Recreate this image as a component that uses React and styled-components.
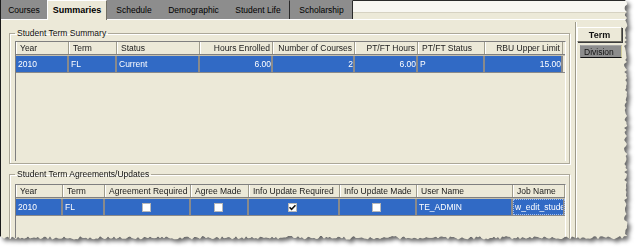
import React from "react";
import styled, { createGlobalStyle } from "styled-components";

const BEIGE = "#ECE9D8";
const TAB_GRAY = "#8d8d8d";
const SEL_BLUE = "#316AC5";

const Global = createGlobalStyle`
  html, body { margin: 0; padding: 0; background: #ffffff; }
  body {
    font-family: "Liberation Sans", Arial, sans-serif;
    font-size: 8.5px;
    color: #000;
  }
  #root { width: 637px; height: 247px; overflow: hidden; }
`;

const W = 629;
const H = 241;

function buildTornClip() {
  let seed = 11;
  const rnd = () => {
    seed = (seed * 9301 + 49297) % 233280;
    return seed / 233280;
  };
  const pts = ["0px 0px", `${W - 4}px 0px`];
  for (let y = 2; y <= H - 5; y += 2) {
    pts.push(`${(W - 5 + rnd() * 3.5).toFixed(1)}px ${y}px`);
  }
  for (let x = W - 5; x >= 0; x -= 2) {
    pts.push(`${x}px ${(H - 5 + rnd() * 3.5).toFixed(1)}px`);
  }
  pts.push(`0px ${H - 4}px`);
  return `polygon(${pts.join(",")})`;
}
const TORN = buildTornClip();

const Shadow = styled.div`
  width: ${W}px;
  height: ${H}px;
  filter: drop-shadow(3px 3px 2px rgba(0, 0, 0, 0.6));
`;

const Window = styled.div`
  width: ${W}px;
  height: ${H}px;
  box-sizing: border-box;
  background: ${BEIGE};
  border-left: 1px solid #1a1a1a;
  display: flex;
  flex-direction: column;
  clip-path: ${TORN};
`;

const TabStrip = styled.div`
  display: flex;
  height: 19px;
  flex: 0 0 19px;
`;

const Tab = styled.div`
  width: ${(p) => p.$w}px;
  flex: 0 0 ${(p) => p.$w}px;
  box-sizing: border-box;
  height: ${(p) => (p.$active ? 20 : 19)}px;
  display: flex;
  align-items: center;
  justify-content: center;
  padding-bottom: 1px;
  background: ${(p) => (p.$active ? BEIGE : TAB_GRAY)};
  font-weight: ${(p) => (p.$active ? 700 : 400)};
  font-size: ${(p) => (p.$active ? "9px" : "8.5px")};
  color: #000;
  white-space: nowrap;
  border-top: 1px solid ${(p) => (p.$active ? "#ffffff" : TAB_GRAY)};
  border-left: 1px solid ${(p) => (p.$active ? "#ffffff" : TAB_GRAY)};
  border-right: 1px solid
    ${(p) => (p.$active ? "#716f64" : p.$edge ? "#2a2a2a" : TAB_GRAY)};
  position: relative;
  z-index: ${(p) => (p.$active ? 1 : 0)};
`;

const StripFiller = styled.div`
  flex: 1;
  height: 19px;
  box-sizing: border-box;
  border-top: 1px solid #2a2a2a;
  background: linear-gradient(#f8f7f2 0, #f8f7f2 11px, #d6d2c2 11px, #d6d2c2 12px, ${BEIGE} 12px);
`;

const Body = styled.div`
  flex: 1;
  display: flex;
  border-top: 1px solid #ffffff;
  min-height: 0;
`;

const Main = styled.div`
  width: 574px;
  flex: 0 0 574px;
  display: flex;
  flex-direction: column;
  min-height: 0;
`;

const GroupBox = styled.fieldset`
  margin: ${(p) => p.$mt}px 0 0 8px;
  width: 561px;
  box-sizing: border-box;
  padding: ${(p) => p.$pt}px 3px 2px 5px;
  border: 1px solid #aca899;
  box-shadow: 1px 1px 0 #ffffff, inset 1px 1px 0 #ffffff;
  min-width: 0;
  display: flex;
  flex-direction: column;
  flex: ${(p) => (p.$grow ? "1" : "0 0 auto")};
  min-height: 0;
`;

const Legend = styled.legend`
  padding: 0 2px;
  margin: 0;
  line-height: 11px;
  font-size: 8.5px;
  color: #111;
`;

const Grid = styled.div`
  box-sizing: border-box;
  border-left: 1px solid #7f7f7f;
  border-top: 1px solid #7f7f7f;
  border-right: 1px solid #ffffff;
  background: ${BEIGE};
  height: ${(p) => (p.$h ? `${p.$h}px` : "auto")};
  flex: ${(p) => (p.$h ? "0 0 auto" : "1")};
  overflow: hidden;
`;

const HeaderRow = styled.div`
  display: grid;
  grid-template-columns: ${(p) => p.$cols};
  height: 13px;
  box-sizing: border-box;
  border-bottom: 1px solid #808080;
`;

const HeadCell = styled.div`
  box-sizing: border-box;
  display: flex;
  align-items: center;
  justify-content: ${(p) => (p.$align === "right" ? "flex-end" : "flex-start")};
  padding: 0 ${(p) => (p.$align === "right" ? 2 : 0)}px 0
    ${(p) => (p.$align === "right" ? 0 : 4)}px;
  border-right: 1px solid #9f9c8c;
  box-shadow: inset 1px 0 0 #ffffff;
  color: #1a1a1a;
  white-space: nowrap;
  overflow: hidden;
`;

const DataRow = styled.div`
  display: grid;
  grid-template-columns: ${(p) => p.$cols};
  height: 18px;
  box-sizing: border-box;
  border-top: 1px solid #c3bfae;
  border-bottom: 1px solid #8a8a8a;
`;

const Cell = styled.div`
  box-sizing: border-box;
  display: flex;
  align-items: center;
  justify-content: ${(p) =>
    p.$align === "right" ? "flex-end" : p.$align === "center" ? "center" : "flex-start"};
  padding: 0 ${(p) => (p.$align === "right" ? 0 : 2)}px 0
    ${(p) => (p.$align === "left" || !p.$align ? 2 : 0)}px;
  background: ${SEL_BLUE};
  color: #ffffff;
  border-right: 2px solid #8a8a8a;
  white-space: nowrap;
  overflow: hidden;
  outline: ${(p) => (p.$focus ? "1px dotted #9fbef0" : "none")};
  outline-offset: -1px;
`;

const Check = styled.span`
  width: 9px;
  height: 9px;
  box-sizing: border-box;
  background: #ffffff;
  border: 1px solid #b8b8b8;
  display: inline-flex;
  align-items: center;
  justify-content: center;
`;

const SidePanel = styled.div`
  flex: 1;
  margin-top: 2px;
  border-left: 1px solid #9d9a8a;
  box-shadow: inset 1px 0 0 #ffffff;
  padding: 5px 0 0 1px;
  display: flex;
  flex-direction: column;
  align-items: flex-start;
`;

const SideTab = styled.div`
  box-sizing: border-box;
  width: ${(p) => (p.$active ? 45 : 42)}px;
  height: ${(p) => (p.$active ? 15 : 13)}px;
  margin: ${(p) => (p.$active ? "0 0 0 0" : "3px 0 0 3px")};
  display: flex;
  align-items: center;
  justify-content: ${(p) => (p.$active ? "center" : "flex-start")};
  padding-left: ${(p) => (p.$active ? 0 : 3)}px;
  background: ${(p) => (p.$active ? BEIGE : TAB_GRAY)};
  font-weight: ${(p) => (p.$active ? 700 : 400)};
  font-size: ${(p) => (p.$active ? "9px" : "8.5px")};
  color: #111;
  border-style: solid;
  border-width: 1px;
  border-color: ${(p) =>
    p.$active ? "#ffffff #716f64 #716f64 #ffffff" : "#a8a8a8 #d2ce9c #111111 #8d8d8d"};
  box-shadow: ${(p) => (p.$active ? "1px 1px 0 #3c3c3c" : "none")};
`;

const tabs = [
  { label: "Courses", w: 46 },
  { label: "Summaries", w: 60, active: true },
  { label: "Schedule", w: 54 },
  { label: "Demographic", w: 65 },
  { label: "Student Life", w: 64, edge: true },
  { label: "Scholarship", w: 63, edge: true },
];

const cols1 = "53px 48px 83px 73px 82px 63px 67px 78px";
const head1 = [
  ["Year"],
  ["Term"],
  ["Status"],
  ["Hours Enrolled", "right"],
  ["Number of Courses", "right"],
  ["PT/FT Hours", "right"],
  ["PT/FT Status"],
  ["RBU Upper Limit", "right"],
];
const row1 = [
  ["2010"],
  ["FL"],
  ["Current"],
  ["6.00", "right"],
  ["2", "right"],
  ["6.00", "right"],
  ["P"],
  ["15.00", "right"],
];

const cols2 = "47px 42px 86px 58px 91px 77px 96px 52px";
const head2 = [
  "Year",
  "Term",
  "Agreement Required",
  "Agree Made",
  "Info Update Required",
  "Info Update Made",
  "User Name",
  "Job Name",
];

function CheckBox({ checked }) {
  return (
    <Check>
      {checked && (
        <svg width="7" height="7" viewBox="0 0 7 7">
          <path d="M0.5 3.2 L2.6 5.4 L6.5 1.2" fill="none" stroke="#111" strokeWidth="1.6" />
        </svg>
      )}
    </Check>
  );
}

export default function App() {
  return (
    <>
      <Global />
      <Shadow>
        <Window>
          <TabStrip>
            {tabs.map((t) => (
              <Tab key={t.label} $w={t.w} $active={t.active} $edge={t.edge}>
                {t.label}
              </Tab>
            ))}
            <StripFiller />
          </TabStrip>
          <Body>
            <Main>
              <GroupBox $mt={8} $pt={2}>
                <Legend>Student Term Summary</Legend>
                <Grid $h={120}>
                  <HeaderRow $cols={cols1}>
                    {head1.map(([t, a]) => (
                      <HeadCell key={t} $align={a}>
                        {t}
                      </HeadCell>
                    ))}
                  </HeaderRow>
                  <DataRow $cols={cols1}>
                    {row1.map(([t, a], i) => (
                      <Cell key={i} $align={a}>
                        {t}
                      </Cell>
                    ))}
                  </DataRow>
                </Grid>
              </GroupBox>
              <GroupBox $mt={5} $pt={4} $grow>
                <Legend>Student Term Agreements/Updates</Legend>
                <Grid>
                  <HeaderRow $cols={cols2}>
                    {head2.map((t) => (
                      <HeadCell key={t}>{t}</HeadCell>
                    ))}
                  </HeaderRow>
                  <DataRow $cols={cols2}>
                    <Cell>2010</Cell>
                    <Cell>FL</Cell>
                    <Cell $align="center">
                      <CheckBox />
                    </Cell>
                    <Cell $align="center">
                      <CheckBox />
                    </Cell>
                    <Cell $align="center">
                      <CheckBox checked />
                    </Cell>
                    <Cell $align="center">
                      <CheckBox />
                    </Cell>
                    <Cell>TE_ADMIN</Cell>
                    <Cell $focus>w_edit_stude</Cell>
                  </DataRow>
                </Grid>
              </GroupBox>
            </Main>
            <SidePanel>
              <SideTab $active>Term</SideTab>
              <SideTab>Division</SideTab>
            </SidePanel>
          </Body>
        </Window>
      </Shadow>
    </>
  );
}
